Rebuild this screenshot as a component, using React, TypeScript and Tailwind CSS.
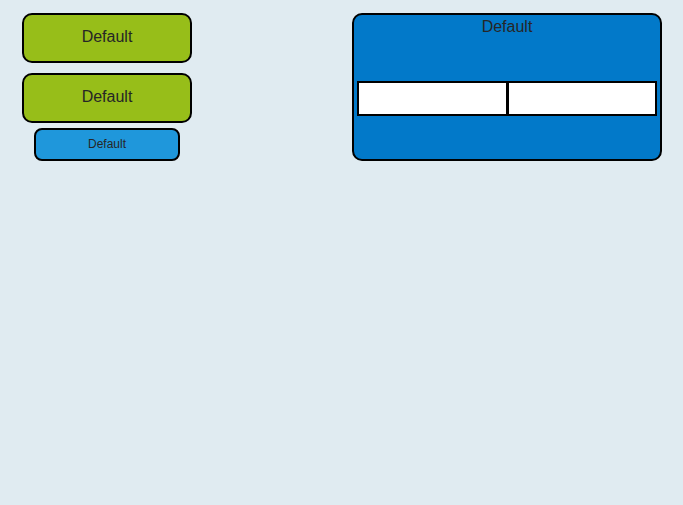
import React from 'react';

const font = { fontFamily: '"Liberation Sans", Arial, sans-serif' };

const App: React.FC = () => {
  return (
    <div className="w-[683px] h-[505px] bg-[#e0ebf1] flex items-start pt-[13px] pl-[22px]" style={font}>
      {/* Left buttons */}
      <div className="flex flex-col w-[170px]">
        <button className="h-[50px] w-full rounded-[10px] border-2 border-black bg-[#97be19] text-[16px] text-[#262626] pb-[2px]">
          Default
        </button>
        <button className="mt-[10px] h-[50px] w-full rounded-[10px] border-2 border-black bg-[#97be19] text-[16px] text-[#262626] pb-[2px]">
          Default
        </button>
        <button className="mt-[5px] ml-[12px] h-[33px] w-[146px] rounded-[8px] border-2 border-black bg-[#1f97db] text-[12px] text-[#262626] pb-px">
          Default
        </button>
      </div>

      {/* Right panel */}
      <div className="ml-[160px] w-[310px] h-[148px] rounded-[10px] border-2 border-black bg-[#0279c9] flex flex-col">
        <div className="text-center text-[16px] leading-[18px] text-[#262626] pt-[3px]">Default</div>
        <div className="flex mt-[45px] px-[3px]">
          <div className="w-[151px] h-[35px] bg-white border-2 border-black"></div>
          <div className="flex-1 h-[35px] bg-white border-2 border-black -ml-px"></div>
        </div>
      </div>
    </div>
  );
};

export default App;
